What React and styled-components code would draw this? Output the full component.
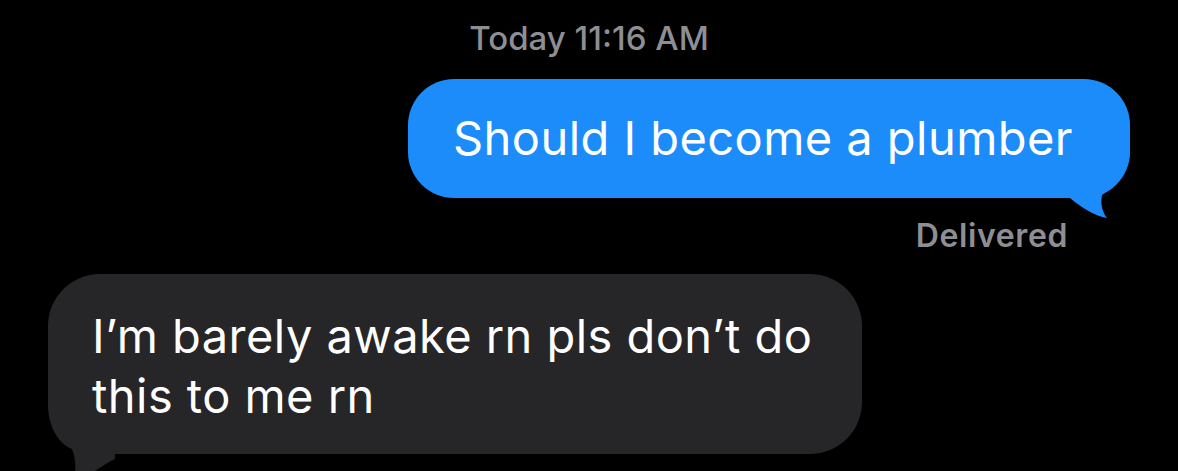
import React from "react";
import styled, { createGlobalStyle } from "styled-components";

const Global = createGlobalStyle`
  html, body { margin: 0; padding: 0; background: #000; }
  body { font-family: Inter, "Noto Sans", sans-serif; -webkit-font-smoothing: antialiased; }
`;

const Screen = styled.div`
  width: 1178px;
  height: 471px;
  overflow: hidden;
  background: #000;
  display: flex;
  flex-direction: column;
  box-sizing: border-box;
  padding: 18px 48px 0 48px;
`;

const Stamp = styled.div`
  text-align: center;
  color: #8e8e93;
  font-size: 33px;
  line-height: 40px;
  font-weight: 500;
`;

const Row = styled.div`
  display: flex;
  justify-content: ${(p) => (p.$sent ? "flex-end" : "flex-start")};
  margin-top: ${(p) => p.$top}px;
`;

const Bubble = styled.div`
  position: relative;
  box-sizing: border-box;
  background: ${(p) => (p.$sent ? "#1b8cfa" : "#262628")};
  color: #fff;
  border-radius: ${(p) => (p.$sent ? 46 : 52)}px;
  font-size: 47px;
  letter-spacing: 0.45px;
  line-height: 60px;
  padding: ${(p) => (p.$sent ? "29px 57px 30px 45px" : "32px 40px 28px 44px")};
  width: ${(p) => (p.$sent ? "auto" : "814px")};
  white-space: ${(p) => (p.$sent ? "nowrap" : "normal")};
`;

const Text = styled.span`
  position: relative;
`;

const Tail = styled.svg`
  position: absolute;
  overflow: visible;
  ${(p) => (p.$sent ? "right: -10px; bottom: -24px;" : "left: -10px; bottom: -30px;")}
`;

const Status = styled.div`
  align-self: flex-end;
  margin-top: 20px;
  margin-right: 62px;
  color: #8e8e93;
  font-size: 32px;
  letter-spacing: 0.6px;
  line-height: 36px;
  font-weight: 600;
`;

export default function App() {
  return (
    <>
      <Global />
      <Screen>
        <Stamp>Today 11:16 AM</Stamp>
        <Row $sent $top={21}>
          <Bubble $sent>
            <Tail $sent width="80" height="82" viewBox="0 0 80 82">
              <path
                d="M70 10 C70 30 56 45 42 55 C40 65 43 73 47 78 C35 76 22 68 10 58 L10 10 Z"
                fill="#1b8cfa"
              />
            </Tail>
            <Text>Should I become a plumber</Text>
          </Bubble>
        </Row>
        <Status>Delivered</Status>
        <Row $top={20}>
          <Bubble>
            <Tail width="80" height="80" viewBox="0 0 80 80">
              <path
                d="M10 0 C10 25 22 40 34 45 C38 55 38 65 36 80 C52 72 62 62 77 55 L77 0 Z"
                fill="#262628"
              />
            </Tail>
            <Text>I’m barely awake rn pls don’t do this to me rn</Text>
          </Bubble>
        </Row>
      </Screen>
    </>
  );
}
